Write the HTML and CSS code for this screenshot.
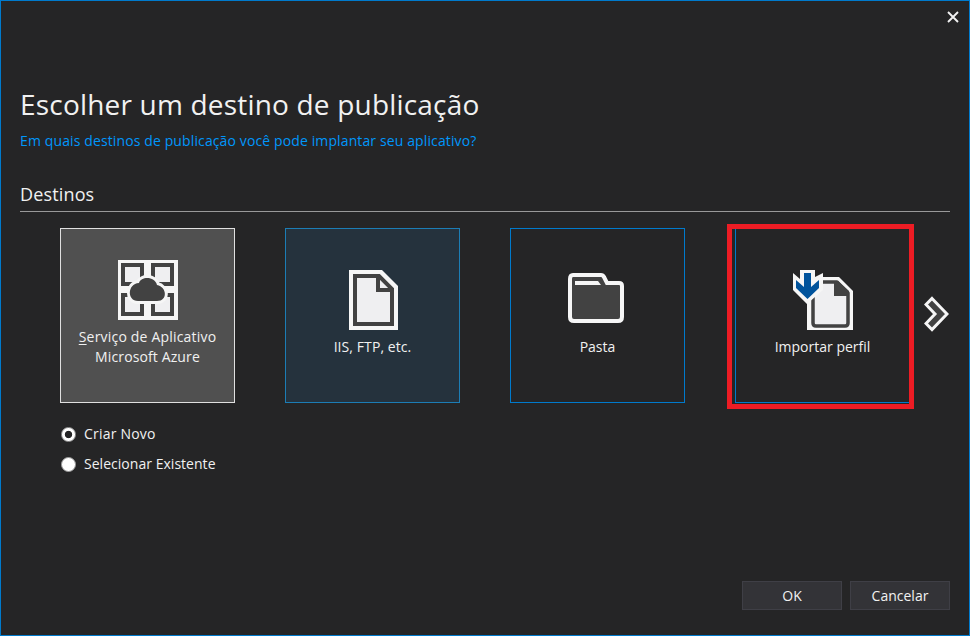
FILE: index.html
```html
<!DOCTYPE html>
<html lang="pt-BR">
<head>
<meta charset="utf-8">
<title>Escolher um destino de publicação</title>
<link rel="stylesheet" href="styles.css">
</head>
<body>
<main class="dialog">
  <header class="titlebar">
    <button class="close" aria-label="Fechar"><svg width="12" height="12" viewBox="0 0 12 12"><path d="M1 1 11 11M11 1 1 11" fill="none" stroke="#f1f1f1" stroke-width="1.9"/></svg></button>
  </header>
  <h1><span class="t-title">Escolher um destino de publicação</span></h1>
  <p class="subtitle"><span class="t-sub">Em quais destinos de publicação você pode implantar seu aplicativo?</span></p>
  <h2><span class="t-sec">Destinos</span></h2>
  <section class="targets">
    <div class="card selected">
      <svg width="60" height="60" viewBox="0 0 60 60">
        <path fill="#f6f6f6" d="M0 0h60v60H0z"/>
        <path fill="#efeff1" stroke="#424242" stroke-width="4" d="M5 5h19v19H5zM35 5h19v19H35zM5 35h19v19H5zM35 35h19v19H35z"/>
        <path fill="#f6f6f6" d="M26 15h7v29h-7zM9 26h42v7H9z"/>
        <path fill="#424242" stroke="#f6f6f6" stroke-width="6" paint-order="stroke" d="M20 41C9 41 9 24 21 23 23 16 37 16 39 25 49 27 50 41 39 41Z"/>
      </svg>
      <span class="label t-azure"><u>S</u>erviço de Aplicativo</span>
      <span class="label t-ms">Microsoft Azure</span>
    </div>
    <div class="card hover">
      <svg width="49" height="60" viewBox="0 0 49 60">
        <path fill="#f6f6f6" d="M0 0h33l16 16v44H0z"/>
        <path fill="#efeff1" stroke="#424242" stroke-width="4" d="M6 6h24l13 13v35H6z"/>
        <path fill="none" stroke="#424242" stroke-width="4" d="M29 5v15h14"/>
      </svg>
      <span class="label t-iis">IIS, FTP, etc.</span>
    </div>
    <div class="card folder">
      <svg width="56" height="50" viewBox="0 0 56 50">
        <path fill="#424242" stroke="#f6f6f6" stroke-width="4" d="M5 2h28q2 0 3 2l3 6h12q3 0 3 3v31q0 4-4 4H6q-4 0-4-4V6q0-4 3-4z"/>
        <path fill="#f6f6f6" d="M7 8h23l3 4H7z"/>
      </svg>
      <span class="label t-pasta">Pasta</span>
    </div>
    <div class="card imported">
      <svg width="60" height="60" viewBox="0 0 60 60">
        <path fill="#f6f6f6" d="M14 7h32l14 14v39H14z"/>
        <path fill="#efeff1" stroke="#424242" stroke-width="3.500" stroke-linejoin="round" d="M20 12h24l11 11v30q0 3-3 3H23q-3 0-3-3z"/>
        <path fill="#424242" d="M41 11h4l11 10v5H41z"/>
        <path fill="#f6f6f6" d="M7 0h15v7l8-4v17L14 34 0 20V3l7 6z"/>
        <path fill="#00539c" d="M11 3h7v14l8-7v8L14.500 29 3 18v-8l8 7z"/>
      </svg>
      <span class="label t-import">Importar perfil</span>
      <i class="highlight"></i>
    </div>
    <svg class="next" width="25" height="36" viewBox="0 0 25 36"><path fill="#424242" stroke="#f6f6f6" stroke-width="3" d="M8 2.500 23 18 8 33.500 2 27.500l9-9.500-9-9.500z"/></svg>
  </section>
  <section class="options">
    <div class="option"><i class="radio checked"></i><span class="t-new">Criar Novo</span></div>
    <div class="option"><i class="radio"></i><span class="t-existing">Selecionar Existente</span></div>
  </section>
  <footer>
    <button class="btn"><span class="t-ok">OK</span></button>
    <button class="btn"><span class="t-cancel">Cancelar</span></button>
  </footer>
</main>
</body>
</html>
```
FILE: styles.css
```css
* { box-sizing: border-box; }
body { margin: 0; }
.dialog {
  width: 970px; height: 636px; padding: 0 19px;
  display: flex; flex-direction: column;
  border: 1px solid #007acc; background: #252526; color: #f1f1f1;
  font: 14px/20px "Open Sans", "Noto Sans", sans-serif;
  white-space: nowrap; overflow: hidden;
}
.titlebar { height: 83px; display: flex; justify-content: flex-end; align-items: flex-start; margin-right: -9px; }
.close { display: flex; margin-top: 10px; padding: 0; border: 0; background: none; }
h1 { margin: 0; height: 40px; font-size: 28px; line-height: 40px; font-weight: 400; letter-spacing: .19px; }
.subtitle { margin: 7px 0 0; height: 20px; color: #0097fb; letter-spacing: .12px; }
h2 { margin: 28px 0 0; height: 33px; padding-top: 2px; font-size: 18px; line-height: 26px; font-weight: 400; letter-spacing: .15px; border-bottom: 1px solid #999; }
.targets { display: flex; gap: 50px; margin: 16px 0 0 40px; height: 175px; }
.card {
  position: relative; flex: none; width: 175px; height: 175px; padding-top: 41px;
  display: flex; flex-direction: column; align-items: center; border: 1px solid #007acc;
}
.card svg { display: block; flex: none; margin-bottom: 7px; }
.selected { padding-top: 31px; background: #505050; border-color: #e0e0e0; }
.hover { background: #25323d; border-color: #1c7db5; padding-left: 2px; }
.folder { padding-top: 44px; }
.folder svg { margin: 0 3px 14px 0; }
.label { line-height: 20px; }
.t-azure { letter-spacing: .19px; }
.t-ms { letter-spacing: .12px; }
.t-iis { letter-spacing: .08px; margin-right: 2px; }
u { text-underline-offset: 2px; }
.highlight { position: absolute; left: -9px; top: -5px; width: 187px; height: 185px; border: 5px solid #ed1c24; }
.next { flex: none; margin: 68px 0 0 -36px; }
.options { display: flex; flex-direction: column; gap: 10px; margin: 21px 0 0 41px; }
.option { display: flex; align-items: center; gap: 8px; height: 20px; }
.t-new { letter-spacing: .2px; }
.t-existing { letter-spacing: .03px; }
.radio { width: 15px; height: 15px; border-radius: 50%; background: #fff; border: 1px solid #999; }
.checked { background: radial-gradient(circle, #252526 0 3.3px, #fff 4.1px); }
footer { display: flex; justify-content: flex-end; gap: 8px; margin-top: 107px; }
.btn { width: 100px; height: 29px; padding: 0; border: 1px solid #3f3f46; background: #333337; color: #f1f1f1; font: inherit; }
```
